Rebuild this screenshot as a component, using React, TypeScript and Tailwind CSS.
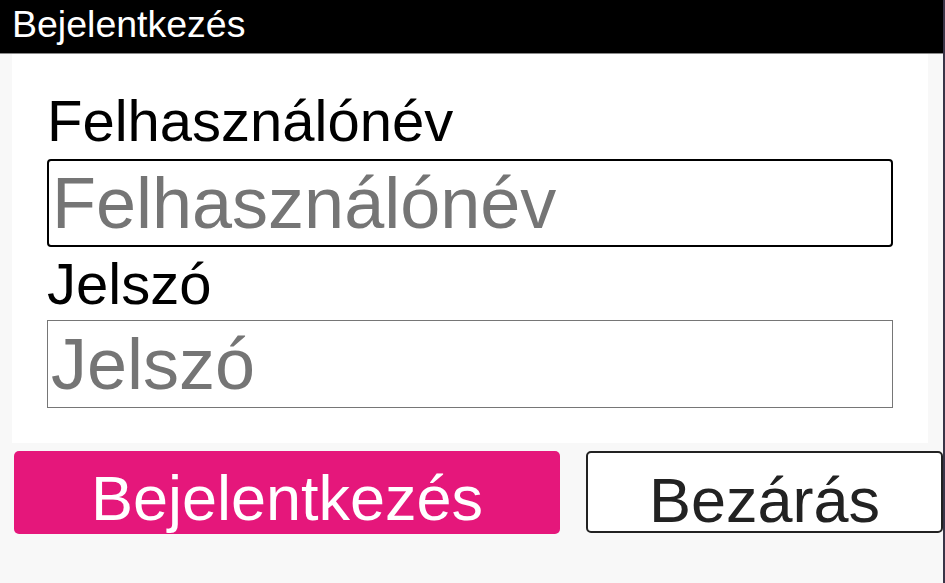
import React from "react";

export default function App() {
  return (
    <div className="flex h-[583px] w-[945px] overflow-hidden bg-[#f8f8f8] font-['Liberation_Sans',Arial,sans-serif]">
      <div className="flex w-[943px] flex-col">
        <div className="h-[54px] border-b border-[#8a8a8a] bg-black pl-3 pt-[3px] text-[37.5px] leading-[42px] text-white">
          Bejelentkezés
        </div>
        <div className="ml-3 flex w-[916px] flex-col bg-white px-[35px] pb-[35px] pt-[34px]">
          <label className="text-[58px] leading-[66px] text-black">Felhasználónév</label>
          <input
            className="mt-[5px] h-[88px] w-full rounded-[4px] border-2 border-black bg-white pl-[3px] text-[72px] text-black outline-none placeholder:text-[#757575]"
            placeholder="Felhasználónév"
          />
          <label className="mt-[4px] text-[58px] leading-[66px] text-black">Jelszó</label>
          <input
            type="password"
            className="mt-[3px] h-[88px] w-full border border-[#767676] bg-white pl-[3px] text-[72px] text-black outline-none placeholder:text-[#757575]"
            placeholder="Jelszó"
          />
        </div>
        <div className="mt-2 flex gap-[26px] pl-[14px]">
          <button className="h-[83px] w-[546px] rounded-[5px] bg-[#e5177b] text-[63px] text-white">
            Bejelentkezés
          </button>
          <button className="h-[82px] w-[357px] rounded-[5px] border-2 border-[#222222] bg-white text-[63px] text-[#222222]">
            Bezárás
          </button>
        </div>
      </div>
      <div className="w-[2px] bg-[#3a3548]" />
    </div>
  );
}
